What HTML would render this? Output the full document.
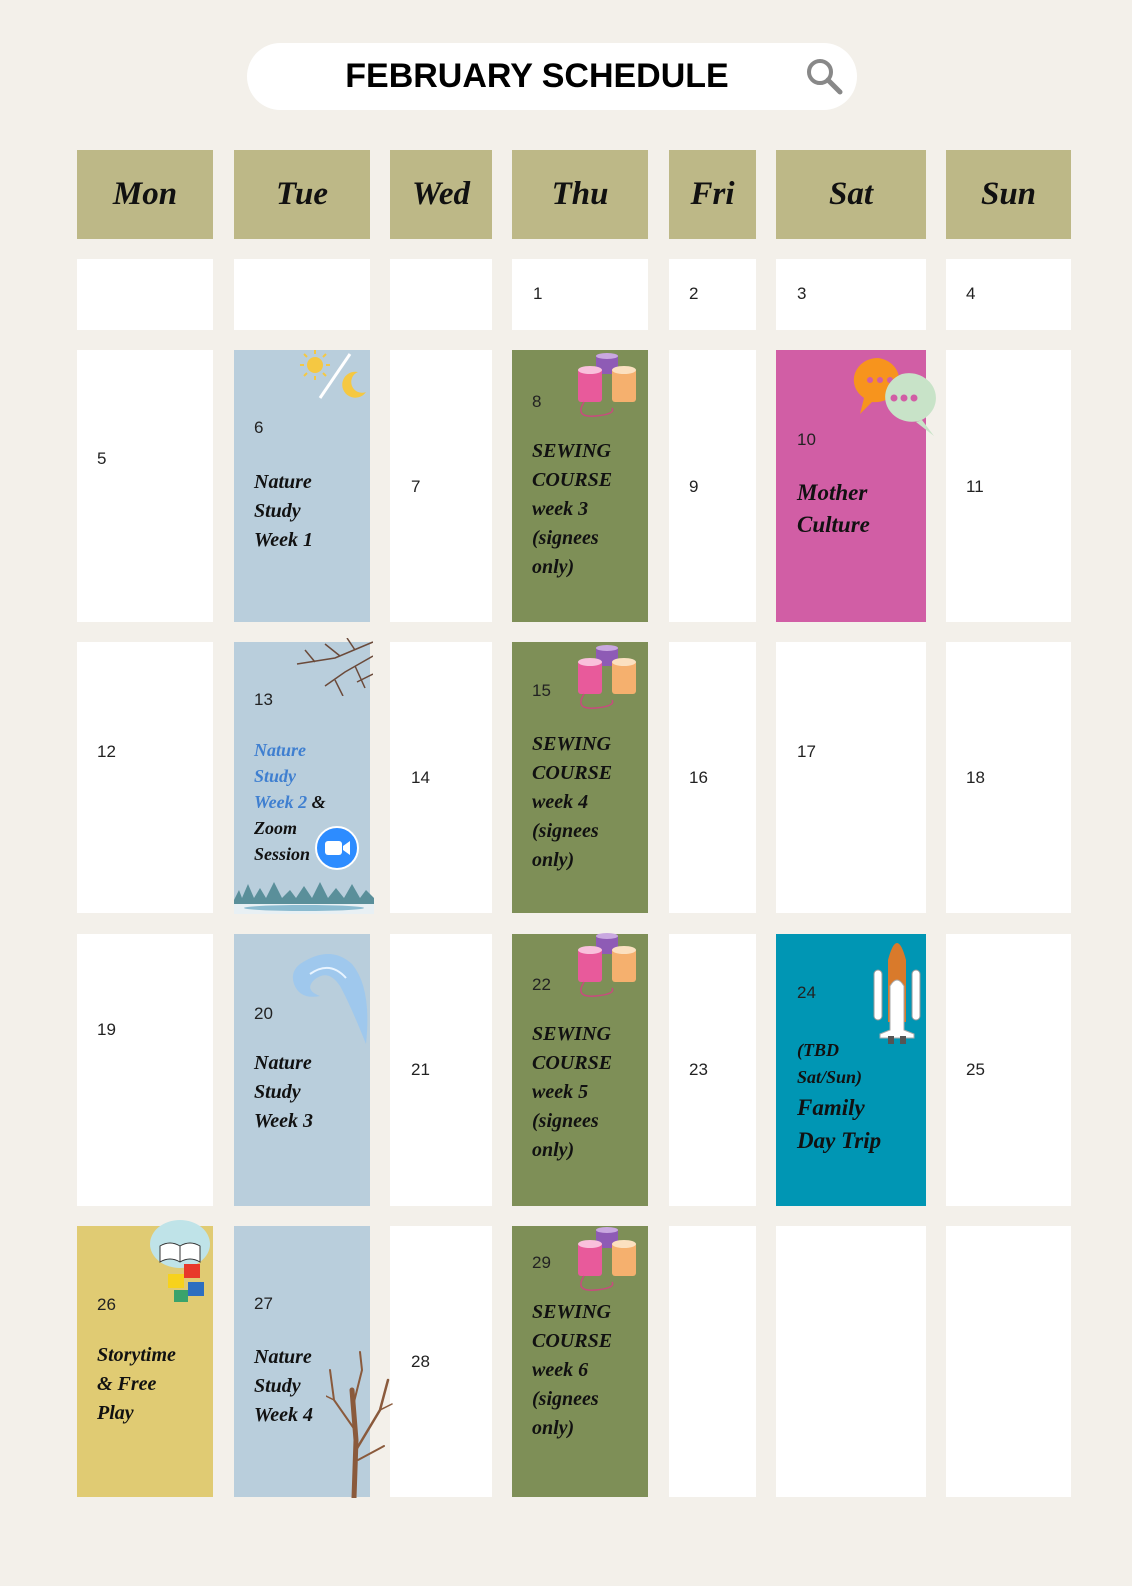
<!DOCTYPE html>
<html><head><meta charset="utf-8"><style>
*{margin:0;padding:0;box-sizing:border-box}
body{width:1132px;height:1586px;background:#f3f0ea;position:relative;overflow:hidden;font-family:"Liberation Sans",sans-serif}
.c{position:absolute;background:#fff}
.h{position:absolute;background:#bdb887;font-family:"Liberation Serif",serif;font-weight:bold;font-style:italic;font-size:33px;display:flex;align-items:center;justify-content:center;color:#111}
.n{position:absolute;font-size:17px;line-height:20px;color:#222}
.e{position:absolute;font-family:"Liberation Serif",serif;font-weight:bold;font-style:italic;font-size:20px;line-height:29px;color:#111;white-space:nowrap}
svg{position:absolute}
</style></head><body>
<div style="position:absolute;left:247px;top:43px;width:610px;height:67px;background:#fff;border-radius:34px"></div>
<div style="position:absolute;left:247px;top:43px;width:580px;height:67px;line-height:67px;text-align:center;font-weight:bold;font-size:34px;color:#000">FEBRUARY SCHEDULE</div>
<svg style="left:805px;top:57px" width="40" height="40" viewBox="0 0 40 40"><circle cx="15" cy="15" r="11" fill="none" stroke="#888" stroke-width="4"/><line x1="23" y1="23" x2="35" y2="35" stroke="#888" stroke-width="5" stroke-linecap="round"/></svg>

<div class="h" style="left:77px;top:150px;width:136px;height:89px">Mon</div>
<div class="h" style="left:234px;top:150px;width:136px;height:89px">Tue</div>
<div class="h" style="left:390px;top:150px;width:102px;height:89px">Wed</div>
<div class="h" style="left:512px;top:150px;width:136px;height:89px">Thu</div>
<div class="h" style="left:669px;top:150px;width:87px;height:89px">Fri</div>
<div class="h" style="left:776px;top:150px;width:150px;height:89px">Sat</div>
<div class="h" style="left:946px;top:150px;width:125px;height:89px">Sun</div>

<div class="c" style="left:77px;top:259px;width:136px;height:71px"></div>
<div class="c" style="left:234px;top:259px;width:136px;height:71px"></div>
<div class="c" style="left:390px;top:259px;width:102px;height:71px"></div>
<div class="c" style="left:512px;top:259px;width:136px;height:71px"></div>
<div class="c" style="left:669px;top:259px;width:87px;height:71px"></div>
<div class="c" style="left:776px;top:259px;width:150px;height:71px"></div>
<div class="c" style="left:946px;top:259px;width:125px;height:71px"></div>
<div class="n" style="left:533px;top:284px">1</div>
<div class="n" style="left:689px;top:284px">2</div>
<div class="n" style="left:797px;top:284px">3</div>
<div class="n" style="left:966px;top:284px">4</div>

<div class="c" style="left:77px;top:350px;width:136px;height:272px"></div>
<div class="c" style="left:234px;top:350px;width:136px;height:272px;background:#b9cedc"></div>
<div class="c" style="left:390px;top:350px;width:102px;height:272px"></div>
<div class="c" style="left:512px;top:350px;width:136px;height:272px;background:#7e8f57"></div>
<div class="c" style="left:669px;top:350px;width:87px;height:272px"></div>
<div class="c" style="left:776px;top:350px;width:150px;height:272px;background:#d15ea5"></div>
<div class="c" style="left:946px;top:350px;width:125px;height:272px"></div>

<div class="c" style="left:77px;top:642px;width:136px;height:271px"></div>
<div class="c" style="left:234px;top:642px;width:136px;height:271px;background:#b9cedc"></div>
<div class="c" style="left:390px;top:642px;width:102px;height:271px"></div>
<div class="c" style="left:512px;top:642px;width:136px;height:271px;background:#7e8f57"></div>
<div class="c" style="left:669px;top:642px;width:87px;height:271px"></div>
<div class="c" style="left:776px;top:642px;width:150px;height:271px"></div>
<div class="c" style="left:946px;top:642px;width:125px;height:271px"></div>

<div class="c" style="left:77px;top:934px;width:136px;height:272px"></div>
<div class="c" style="left:234px;top:934px;width:136px;height:272px;background:#b9cedc"></div>
<div class="c" style="left:390px;top:934px;width:102px;height:272px"></div>
<div class="c" style="left:512px;top:934px;width:136px;height:272px;background:#7e8f57"></div>
<div class="c" style="left:669px;top:934px;width:87px;height:272px"></div>
<div class="c" style="left:776px;top:934px;width:150px;height:272px;background:#0096b4"></div>
<div class="c" style="left:946px;top:934px;width:125px;height:272px"></div>

<div class="c" style="left:77px;top:1226px;width:136px;height:271px;background:#e0cb73"></div>
<div class="c" style="left:234px;top:1226px;width:136px;height:271px;background:#b9cedc"></div>
<div class="c" style="left:390px;top:1226px;width:102px;height:271px"></div>
<div class="c" style="left:512px;top:1226px;width:136px;height:271px;background:#7e8f57"></div>
<div class="c" style="left:669px;top:1226px;width:87px;height:271px"></div>
<div class="c" style="left:776px;top:1226px;width:150px;height:271px"></div>
<div class="c" style="left:946px;top:1226px;width:125px;height:271px"></div>

<svg style="left:576px;top:352px" width="66" height="70" viewBox="0 0 66 70"><rect x="20" y="2" width="22" height="20" rx="3" fill="#8e5bb5"/><ellipse cx="31" cy="4" rx="11" ry="3" fill="#c9a8e0"/><rect x="2" y="16" width="24" height="34" rx="3" fill="#e85a9b"/><ellipse cx="14" cy="18" rx="12" ry="4" fill="#f9c0dc"/><rect x="36" y="16" width="24" height="34" rx="3" fill="#f5b06e"/><ellipse cx="48" cy="18" rx="12" ry="4" fill="#fbe0c0"/><path d="M8 50 Q-2 66 20 64 Q40 62 36 56" fill="none" stroke="#c84a7e" stroke-width="1.5"/></svg>
<svg style="left:576px;top:644px" width="66" height="70" viewBox="0 0 66 70"><rect x="20" y="2" width="22" height="20" rx="3" fill="#8e5bb5"/><ellipse cx="31" cy="4" rx="11" ry="3" fill="#c9a8e0"/><rect x="2" y="16" width="24" height="34" rx="3" fill="#e85a9b"/><ellipse cx="14" cy="18" rx="12" ry="4" fill="#f9c0dc"/><rect x="36" y="16" width="24" height="34" rx="3" fill="#f5b06e"/><ellipse cx="48" cy="18" rx="12" ry="4" fill="#fbe0c0"/><path d="M8 50 Q-2 66 20 64 Q40 62 36 56" fill="none" stroke="#c84a7e" stroke-width="1.5"/></svg>
<svg style="left:576px;top:932px" width="66" height="70" viewBox="0 0 66 70"><rect x="20" y="2" width="22" height="20" rx="3" fill="#8e5bb5"/><ellipse cx="31" cy="4" rx="11" ry="3" fill="#c9a8e0"/><rect x="2" y="16" width="24" height="34" rx="3" fill="#e85a9b"/><ellipse cx="14" cy="18" rx="12" ry="4" fill="#f9c0dc"/><rect x="36" y="16" width="24" height="34" rx="3" fill="#f5b06e"/><ellipse cx="48" cy="18" rx="12" ry="4" fill="#fbe0c0"/><path d="M8 50 Q-2 66 20 64 Q40 62 36 56" fill="none" stroke="#c84a7e" stroke-width="1.5"/></svg>
<svg style="left:576px;top:1226px" width="66" height="70" viewBox="0 0 66 70"><rect x="20" y="2" width="22" height="20" rx="3" fill="#8e5bb5"/><ellipse cx="31" cy="4" rx="11" ry="3" fill="#c9a8e0"/><rect x="2" y="16" width="24" height="34" rx="3" fill="#e85a9b"/><ellipse cx="14" cy="18" rx="12" ry="4" fill="#f9c0dc"/><rect x="36" y="16" width="24" height="34" rx="3" fill="#f5b06e"/><ellipse cx="48" cy="18" rx="12" ry="4" fill="#fbe0c0"/><path d="M8 50 Q-2 66 20 64 Q40 62 36 56" fill="none" stroke="#c84a7e" stroke-width="1.5"/></svg>

<svg style="left:298px;top:350px" width="74" height="54" viewBox="0 0 74 54"><circle cx="17" cy="15" r="8" fill="#f5c842"/><g stroke="#f5c842" stroke-width="2"><line x1="17" y1="0" x2="17" y2="4"/><line x1="17" y1="26" x2="17" y2="30"/><line x1="2" y1="15" x2="6" y2="15"/><line x1="28" y1="15" x2="32" y2="15"/><line x1="6" y1="4" x2="9" y2="7"/><line x1="25" y1="23" x2="28" y2="26"/><line x1="28" y1="4" x2="25" y2="7"/><line x1="6" y1="26" x2="9" y2="23"/></g><line x1="52" y1="4" x2="22" y2="48" stroke="#fff" stroke-width="3"/><path d="M60 22 A13 13 0 1 0 68 42 A10 10 0 1 1 60 22Z" fill="#f5c842"/></svg>
<svg style="left:852px;top:356px" width="86" height="82" viewBox="0 0 86 82"><path d="M26 2 A24 22 0 1 1 20 46 L8 58 L12 42 A24 22 0 0 1 26 2Z" fill="#f7941d"/><circle cx="18" cy="24" r="3" fill="#d15ea5"/><circle cx="28" cy="24" r="3" fill="#d15ea5"/><circle cx="38" cy="24" r="3" fill="#d15ea5"/><path d="M50 18 A26 24 0 1 1 64 66 L82 80 L70 64 A26 24 0 0 1 50 18Z" fill="#c8e3c8"/><circle cx="42" cy="42" r="3.5" fill="#d15ea5"/><circle cx="52" cy="42" r="3.5" fill="#d15ea5"/><circle cx="62" cy="42" r="3.5" fill="#d15ea5"/></svg>
<svg style="left:295px;top:638px" width="78" height="58" viewBox="0 0 78 58"><g stroke="#6b4a3a" stroke-width="1.5" fill="none"><path d="M78 4 L40 20 L2 26"/><path d="M60 12 L52 0"/><path d="M45 18 L30 6"/><path d="M78 18 L50 34 L30 48"/><path d="M60 28 L70 50"/><path d="M40 42 L48 58"/><path d="M20 24 L10 12"/><path d="M78 36 L62 44"/></g></svg>
<svg style="left:315px;top:826px" width="44" height="44" viewBox="0 0 44 44"><circle cx="22" cy="22" r="21" fill="#2d8cff" stroke="#fff" stroke-width="2"/><rect x="10" y="15" width="17" height="14" rx="3" fill="#fff"/><path d="M28 20 L35 15 V29 L28 24Z" fill="#fff"/></svg>
<svg style="left:234px;top:880px" width="140" height="34" viewBox="0 0 140 34"><path d="M0 20 L5 10 L8 18 L14 4 L20 18 L26 8 L32 18 L40 2 L48 18 L56 10 L62 18 L70 6 L78 18 L86 2 L94 18 L102 8 L110 18 L118 4 L126 18 L132 10 L140 18 V26 H0Z" fill="#5a8f9a"/><path d="M0 24 H140 V34 H0Z" fill="#e8f0f4"/><ellipse cx="70" cy="28" rx="60" ry="3" fill="#8bbbd0"/></svg>
<svg style="left:280px;top:944px" width="92" height="104" viewBox="0 0 92 104"><path d="M20 20 Q50 0 72 20 Q92 44 86 100 Q70 60 60 42 Q48 24 34 36 Q24 46 40 52 Q20 56 14 40 Q10 28 20 20Z" fill="#9cc8ee" opacity="0.9"/><path d="M30 30 Q50 16 66 34" stroke="#e8f4ff" stroke-width="2" fill="none"/></svg>
<svg style="left:868px;top:930px" width="58" height="116" viewBox="0 0 58 116"><rect x="6" y="40" width="8" height="50" rx="4" fill="#fff" stroke="#999"/><rect x="44" y="40" width="8" height="50" rx="4" fill="#fff" stroke="#999"/><path d="M20 30 Q29 -4 38 30 V92 H20Z" fill="#d97a2b"/><path d="M22 56 Q29 44 36 56 V100 L46 104 V108 H12 V104 L22 100Z" fill="#fff" stroke="#aaa"/><rect x="20" y="106" width="6" height="8" fill="#555"/><rect x="32" y="106" width="6" height="8" fill="#555"/></svg>
<svg style="left:144px;top:1214px" width="72" height="106" viewBox="0 0 72 106"><ellipse cx="36" cy="30" rx="30" ry="24" fill="#bfe3e8"/><path d="M16 32 Q26 26 36 32 Q46 26 56 32 V48 Q46 42 36 48 Q26 42 16 48Z" fill="#fff" stroke="#333"/><line x1="36" y1="32" x2="36" y2="48" stroke="#333"/><rect x="40" y="50" width="16" height="14" fill="#e8392b"/><rect x="24" y="60" width="16" height="14" fill="#f7d21c"/><rect x="44" y="68" width="16" height="14" fill="#2d6fc0"/><rect x="30" y="76" width="14" height="12" fill="#3aa36b"/></svg>
<svg style="left:326px;top:1350px" width="68" height="148" viewBox="0 0 68 148"><g stroke="#8a5a3c" fill="none" stroke-linecap="round"><path d="M28 148 L30 90 L26 40" stroke-width="5"/><path d="M30 100 L54 60 L62 30" stroke-width="2.5"/><path d="M29 80 L8 50 L4 20" stroke-width="2"/><path d="M27 56 L36 20 L34 2" stroke-width="2"/><path d="M54 60 L66 54" stroke-width="1.5"/><path d="M8 50 L0 46" stroke-width="1.5"/><path d="M32 110 L58 96" stroke-width="2"/></g></svg>

<div class="n" style="left:97px;top:449px">5</div>
<div class="n" style="left:254px;top:418px">6</div>
<div class="e" style="left:254px;top:468px">Nature<br>Study<br>Week 1</div>
<div class="n" style="left:411px;top:477px">7</div>
<div class="n" style="left:532px;top:392px">8</div>
<div class="e" style="left:532px;top:437px">SEWING<br>COURSE<br>week 3<br>(signees<br>only)</div>
<div class="n" style="left:689px;top:477px">9</div>
<div class="n" style="left:797px;top:430px">10</div>
<div class="e" style="left:797px;top:477px;font-size:23px;line-height:32px">Mother<br>Culture</div>
<div class="n" style="left:966px;top:477px">11</div>

<div class="n" style="left:97px;top:742px">12</div>
<div class="n" style="left:254px;top:690px">13</div>
<div class="e" style="left:254px;top:737px;font-size:18px;line-height:26px"><span style="color:#3f7fd0">Nature<br>Study<br>Week 2</span> &amp;<br>Zoom<br>Session</div>
<div class="n" style="left:411px;top:768px">14</div>
<div class="n" style="left:532px;top:681px">15</div>
<div class="e" style="left:532px;top:730px">SEWING<br>COURSE<br>week 4<br>(signees<br>only)</div>
<div class="n" style="left:689px;top:768px">16</div>
<div class="n" style="left:797px;top:742px">17</div>
<div class="n" style="left:966px;top:768px">18</div>

<div class="n" style="left:97px;top:1020px">19</div>
<div class="n" style="left:254px;top:1004px">20</div>
<div class="e" style="left:254px;top:1049px">Nature<br>Study<br>Week 3</div>
<div class="n" style="left:411px;top:1060px">21</div>
<div class="n" style="left:532px;top:975px">22</div>
<div class="e" style="left:532px;top:1020px">SEWING<br>COURSE<br>week 5<br>(signees<br>only)</div>
<div class="n" style="left:689px;top:1060px">23</div>
<div class="n" style="left:797px;top:983px">24</div>
<div class="e" style="left:797px;top:1037px;font-size:18px;line-height:27px">(TBD<br>Sat/Sun)</div>
<div class="e" style="left:797px;top:1091px;font-size:23px;line-height:33px">Family<br>Day Trip</div>
<div class="n" style="left:966px;top:1060px">25</div>

<div class="n" style="left:97px;top:1295px">26</div>
<div class="e" style="left:97px;top:1341px">Storytime<br>&amp; Free<br>Play</div>
<div class="n" style="left:254px;top:1294px">27</div>
<div class="e" style="left:254px;top:1343px">Nature<br>Study<br>Week 4</div>
<div class="n" style="left:411px;top:1352px">28</div>
<div class="n" style="left:532px;top:1253px">29</div>
<div class="e" style="left:532px;top:1298px">SEWING<br>COURSE<br>week 6<br>(signees<br>only)</div>
</body></html>
